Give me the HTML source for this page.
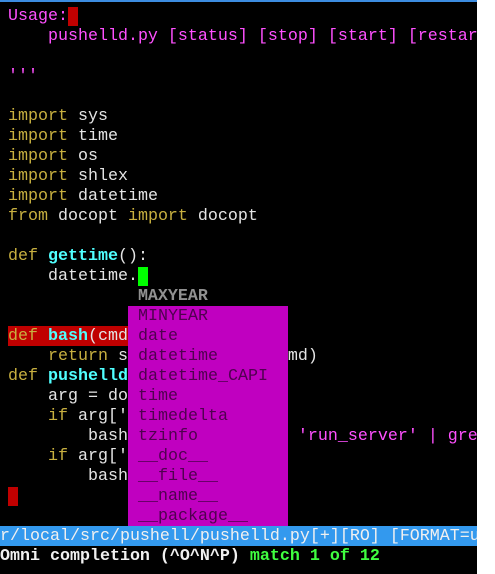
<!DOCTYPE html>
<html><head><style>
html,body{margin:0;padding:0;background:#fff;}
#t{position:absolute;left:0;top:0;width:477px;height:574px;background:#000;overflow:hidden;}
#top{position:absolute;left:0;top:0;width:477px;height:2px;background:#3c8ce0;}
.r{position:absolute;left:8px;height:20px;line-height:21px;white-space:pre;font-family:"Liberation Mono",monospace;font-size:16.67px;color:#e4e4e4;}
.s{color:#ff50ff}.k{color:#c8b040}.f{color:#50ffff;font-weight:bold}
#pop{position:absolute;left:128px;top:306px;width:160px;height:220px;background:#c000c0;}
.p{position:absolute;left:138px;height:20px;line-height:21px;white-space:pre;font-family:"Liberation Mono",monospace;font-size:16.67px;color:#500050;}
</style></head><body><div id="t">
<div id="top"></div>
<div class="r s" style="top:6px">Usage:<span style="background:#c00000"> </span></div>
<div class="r s" style="top:26px">    pushelld.py [status] [stop] [start] [restar</div>
<div class="r s" style="top:66px">'''</div>
<div class="r" style="top:106px"><span class="k">import</span> sys</div>
<div class="r" style="top:126px"><span class="k">import</span> time</div>
<div class="r" style="top:146px"><span class="k">import</span> os</div>
<div class="r" style="top:166px"><span class="k">import</span> shlex</div>
<div class="r" style="top:186px"><span class="k">import</span> datetime</div>
<div class="r" style="top:206px"><span class="k">from</span> docopt <span class="k">import</span> docopt</div>
<div class="r" style="top:246px"><span class="k">def</span> <span class="f">gettime</span>():</div>
<div class="r" style="top:266px">    datetime.<span style="background:#00ff00"> </span></div>
<div class="r" style="top:286px;color:#909090;font-weight:bold">             MAXYEAR</div>
<div class="r" style="top:326px;background:#c00000"><span class="k">def</span> <span class="f">bash</span>(cmd</div>
<div class="r" style="top:346px">    <span class="k">return</span> s                md)</div>
<div class="r" style="top:366px"><span class="k">def</span> <span class="f">pushelld</span></div>
<div class="r" style="top:386px">    arg = do</div>
<div class="r" style="top:406px">    <span class="k">if</span> arg['</div>
<div class="r" style="top:426px">        bash                 <span class="s">'run_server' | grep</span></div>
<div class="r" style="top:446px">    <span class="k">if</span> arg['</div>
<div class="r" style="top:466px">        bash</div>
<div class="r" style="top:486px"><span style="background:#c00000"> </span></div>
<div id="pop"></div>
<div class="p" style="top:306px">MINYEAR</div>
<div class="p" style="top:326px">date</div>
<div class="p" style="top:346px">datetime</div>
<div class="p" style="top:366px">datetime_CAPI</div>
<div class="p" style="top:386px">time</div>
<div class="p" style="top:406px">timedelta</div>
<div class="p" style="top:426px">tzinfo</div>
<div class="p" style="top:446px">__doc__</div>
<div class="p" style="top:466px">__file__</div>
<div class="p" style="top:486px">__name__</div>
<div class="p" style="top:506px">__package__</div>
<div class="r" style="left:0;top:526px;width:477px;background:#3399ee;color:#f0f0f0">r/local/src/pushell/pushelld.py[+][RO] [FORMAT=u</div>
<div class="r" style="left:0;top:546px;font-weight:bold;color:#f0f0f0">Omni completion (^O^N^P) <span style="color:#40ff40">match 1 of 12</span></div>
</div></body></html>
